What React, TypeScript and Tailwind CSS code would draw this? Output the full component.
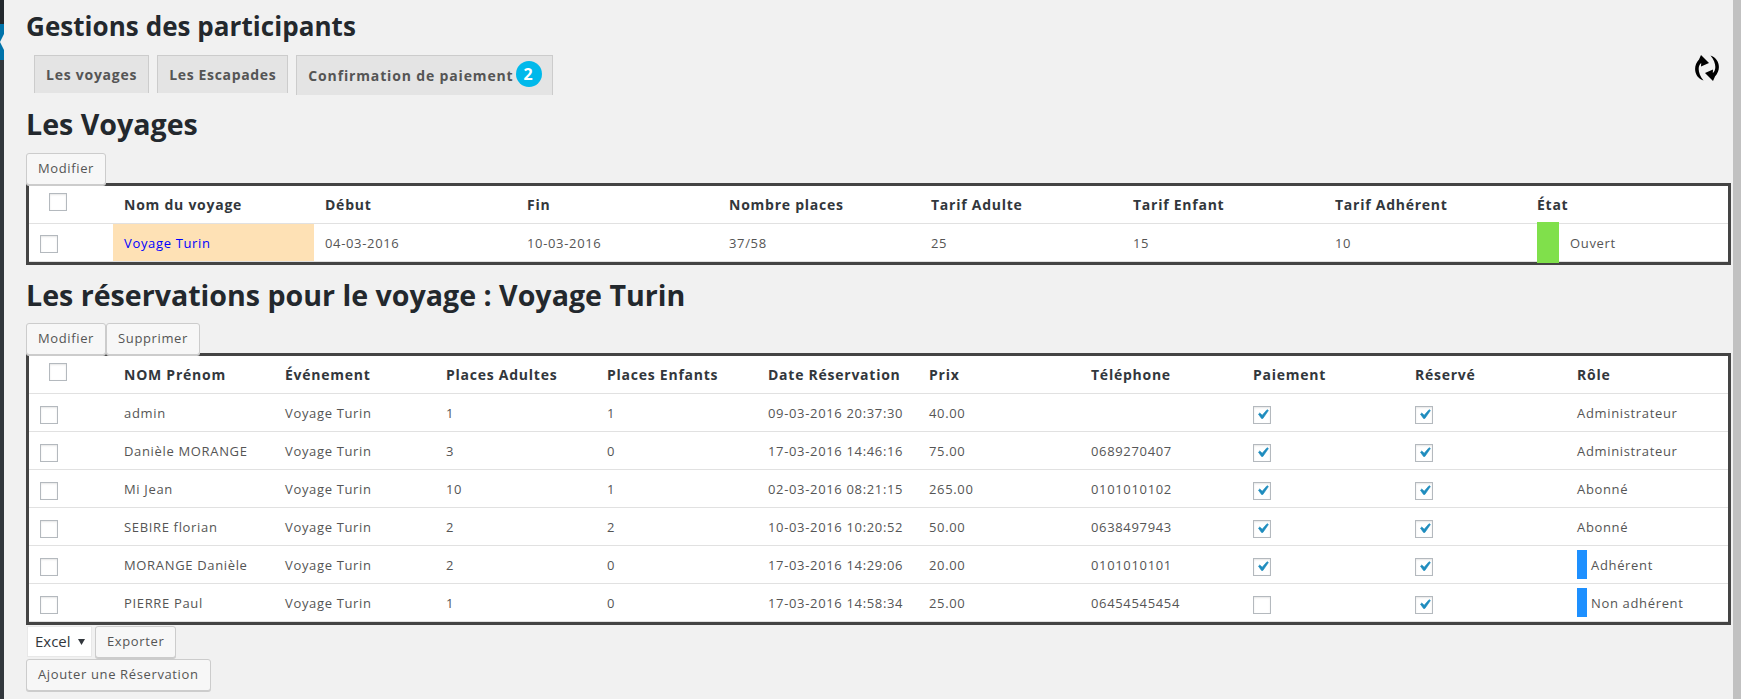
import type { ReactNode } from "react";

function Box({ checked = false, className = "" }: { checked?: boolean; className?: string }) {
  return (
    <span className={`flex items-center justify-center w-[18px] h-[18px] border border-[#b4b9be] bg-white shadow-[inset_0_1px_2px_rgba(0,0,0,0.1)] ${className}`}>
      {checked && (
        <svg viewBox="0 0 20 20" className="w-[19px] h-[19px] shrink-0">
          <path d="M14.83 4.89l1.34.94-5.81 8.38H9.02L5.78 9.67l1.34-1.25 2.57 2.4z" fill="#1e8cbe" stroke="#1e8cbe" strokeWidth="0.7" />
        </svg>
      )}
    </span>
  );
}

function Btn({ children }: { children: ReactNode }) {
  return (
    <button className="relative z-10 h-[32px] px-[11px] rounded-[3px] border border-[#cccccc] bg-[#f7f7f7] text-[13px] tracking-[0.63px] text-[#555555] shadow-[0_1px_0_#cccccc] whitespace-nowrap">
      {children}
    </button>
  );
}

const th = "h-[37px] text-left font-bold text-[#32373c] text-[14px] tracking-[0.75px] pl-[11px] align-middle whitespace-nowrap";
const td = "h-[38px] p-0 pl-[11px] pt-[2px] text-left text-[13px] tracking-[0.66px] align-middle border-t border-[#e1e1e1] whitespace-nowrap";
const tab = "flex items-center bg-[#e4e4e4] border border-b-0 border-[#cccccc] text-[14px] font-bold text-[#555555] whitespace-nowrap";

const trip = ["04-03-2016", "10-03-2016", "37/58", "25", "15", "10"];

const rows = [
  ["admin", "1", "1", "09-03-2016 20:37:30", "40.00", "", true, true, "Administrateur", false],
  ["Danièle MORANGE", "3", "0", "17-03-2016 14:46:16", "75.00", "0689270407", true, true, "Administrateur", false],
  ["Mi Jean", "10", "1", "02-03-2016 08:21:15", "265.00", "0101010102", true, true, "Abonné", false],
  ["SEBIRE florian", "2", "2", "10-03-2016 10:20:52", "50.00", "0638497943", true, true, "Abonné", false],
  ["MORANGE Danièle", "2", "0", "17-03-2016 14:29:06", "20.00", "0101010101", true, true, "Adhérent", true],
  ["PIERRE Paul", "1", "0", "17-03-2016 14:58:34", "25.00", "06454545454", false, true, "Non adhérent", true],
] as const;

const h2 = "text-[28.6px] font-bold text-[#23282d] leading-[34px] whitespace-nowrap";
const arc = "M7 0L15 8 7 11.5 7.2 8C3.6 10.8 3.4 18 9.5 25.5 1 23 -2 12 5 4.5z";

export default function App() {
  return (
    <div className="flex h-[699px] w-[1741px] overflow-hidden bg-[#f1f1f1] font-['Open_Sans',sans-serif]">
      <div className="w-[4px] shrink-0 bg-[#32373c] flex flex-col">
        <div className="h-[24px] bg-[#23282d]" />
        <div className="h-[36px] bg-[#0073aa] flex items-center">
          <svg viewBox="0 0 4 16" className="w-[4px] h-[16px]">
            <polygon points="4,0 0,8 4,16" fill="#f1f1f1" />
          </svg>
        </div>
      </div>

      <main className="relative flex-1 min-w-0 pl-[22px] pr-[2px]">
        <h1 className="text-[26px] font-bold text-[#23282d] leading-[34px] tracking-[0.05px] mt-[9px]">Gestions des participants</h1>

        <div className="flex items-start gap-[8px] pl-[8px] mt-[12px] h-[40px]">
          <div className={`${tab} h-[38px] px-[11px] tracking-[0.75px]`}>Les voyages</div>
          <div className={`${tab} h-[38px] px-[11px] tracking-[0.65px]`}>Les Escapades</div>
          <div className={`${tab} h-[40px] pl-[11px] pr-[10px] tracking-[0.85px]`}>
            Confirmation de paiement
            <span className="ml-[2px] mb-[3px] h-[26px] w-[26px] rounded-full bg-[#00b9eb] text-white flex items-center justify-center text-[16px]">2</span>
          </div>
        </div>

        <svg viewBox="0 0 26 26" className="absolute right-[13px] top-[55px] w-[26px] h-[26px]">
          <path d={arc} fill="#000" />
          <path d={arc} fill="#000" transform="rotate(180 13 13)" />
        </svg>

        <h2 className={`${h2} mt-[12px]`}>Les Voyages</h2>

        <div className="mt-[12px] h-[30px]">
          <Btn>Modifier</Btn>
        </div>

        <div className="border-[3px] border-[#444444] bg-white">
          <table className="w-full table-fixed border-separate border-spacing-0 border-b border-b-[#e1e1e1]">
            <colgroup>
              <col className="w-[84px]" />
              <col className="w-[201px]" />
            </colgroup>
            <thead>
              <tr>
                <th className="h-[37px] pl-[20px] align-top pt-[7px]"><Box /></th>
                <th className={th}>Nom du voyage</th>
                <th className={th}>Début</th>
                <th className={th}>Fin</th>
                <th className={th}>Nombre places</th>
                <th className={th}>Tarif Adulte</th>
                <th className={th}>Tarif Enfant</th>
                <th className={th}>Tarif Adhérent</th>
                <th className={th}>État</th>
              </tr>
            </thead>
            <tbody>
              <tr className="text-[#555555]">
                <td className={td}><Box /></td>
                <td className={`${td} bg-[#fee1b5] text-[#0000ff]`}>Voyage Turin</td>
                {trip.map((v) => (
                  <td key={v} className={td}>{v}</td>
                ))}
                <td className={`${td} relative !pl-[44px]`}>
                  <div className="absolute left-[11px] top-[-2px] w-[22px] h-[41px] bg-[#80e04b]" />
                  Ouvert
                </td>
              </tr>
            </tbody>
          </table>
        </div>

        <h2 className={`${h2} mt-[13px]`}>Les réservations pour le voyage : Voyage Turin</h2>

        <div className="mt-[11px] h-[30px]">
          <Btn>Modifier</Btn>
          <Btn>Supprimer</Btn>
        </div>

        <div className="border-[3px] border-[#444444] bg-white">
          <table className="w-full table-fixed border-separate border-spacing-0 border-b border-b-[#e1e1e1]">
            <colgroup>
              <col className="w-[84px]" />
              <col className="w-[161px]" />
              <col className="w-[161px]" />
              <col className="w-[161px]" />
              <col className="w-[161px]" />
              <col className="w-[161px]" />
              <col className="w-[162px]" />
              <col className="w-[162px]" />
              <col className="w-[162px]" />
              <col className="w-[162px]" />
            </colgroup>
            <thead>
              <tr>
                <th className="h-[37px] pl-[20px] align-top pt-[7px]"><Box /></th>
                <th className={th}>NOM Prénom</th>
                <th className={th}>Événement</th>
                <th className={th}>Places Adultes</th>
                <th className={th}>Places Enfants</th>
                <th className={th}>Date Réservation</th>
                <th className={th}>Prix</th>
                <th className={th}>Téléphone</th>
                <th className={th}>Paiement</th>
                <th className={th}>Réservé</th>
                <th className={th}>Rôle</th>
              </tr>
            </thead>
            <tbody className="text-[#555555]">
              {rows.map((r) => (
                <tr key={r[0]}>
                  <td className={td}><Box className="mt-[2px]" /></td>
                  <td className={td}>{r[0]}</td>
                  <td className={td}>Voyage Turin</td>
                  <td className={td}>{r[1]}</td>
                  <td className={td}>{r[2]}</td>
                  <td className={td}>{r[3]}</td>
                  <td className={td}>{r[4]}</td>
                  <td className={td}>{r[5]}</td>
                  <td className={td}><Box checked={r[6]} className="mt-[2px]" /></td>
                  <td className={td}><Box checked={r[7]} className="mt-[2px]" /></td>
                  <td className={td}>
                    {r[9] ? (
                      <div className="flex items-center gap-[4px]">
                        <span className="w-[10px] h-[29px] mb-[2px] bg-[#1e90ff]" />
                        {r[8]}
                      </div>
                    ) : (
                      r[8]
                    )}
                  </td>
                </tr>
              ))}
            </tbody>
          </table>
        </div>

        <div className="flex items-start gap-[3px] pl-[1px] mt-[1px] h-[32px]">
          <div className="h-[31px] w-[65px] pl-[7px] bg-white border border-[#e8e8e8] text-[15px] text-[#32373c] flex items-center gap-[7px]">
            Excel
            <svg viewBox="0 0 8 8" className="w-[7px] h-[7px]">
              <polygon points="0,1 8,1 4,8" fill="#32373c" />
            </svg>
          </div>
          <Btn>Exporter</Btn>
        </div>
        <div className="mt-[1px]">
          <Btn>Ajouter une Réservation</Btn>
        </div>
      </main>

      <div className="w-[8px] shrink-0 bg-[#c1c1c1]" />
    </div>
  );
}
